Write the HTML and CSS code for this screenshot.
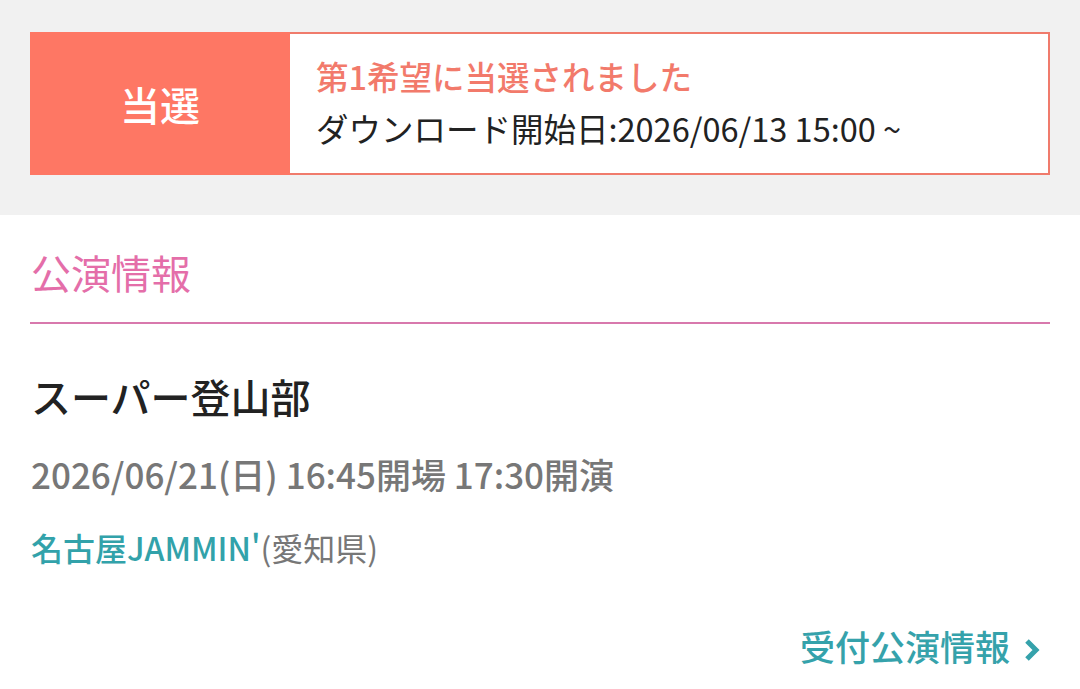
FILE: index.html
```html
<!DOCTYPE html>
<html lang="ja">
<head>
  <meta charset="UTF-8">
  <meta name="viewport" content="width=device-width, initial-scale=1.0">
  <title>公演情報</title>
  <link rel="stylesheet" href="styles.css">
</head>
<body>

<div class="status-area">
  <div class="status-box">
    <div class="status-label">当選</div>
    <div class="status-text">
      <p class="status-title">第1希望に当選されました</p>
      <p class="status-date">ダウンロード開始日:2026/06/13 15:00 ~</p>
    </div>
  </div>
</div>

<div class="info">
  <h2 class="info-heading">公演情報</h2>
  <p class="show-title">スーパー登山部</p>
  <p class="show-date">2026/06/21(日) 16:45開場 17:30開演</p>
  <p class="show-venue"><span class="venue-name">名古屋JAMMIN'</span>(愛知県)</p>
  <div class="more">
    <a class="more-link" href="#">受付公演情報
      <svg class="chevron" width="20" height="26" viewBox="0 0 20 26"><path d="M5 4 L14 13 L5 22" fill="none" stroke="currentColor" stroke-width="5"/></svg>
    </a>
  </div>
</div>

</body>
</html>
```

FILE: styles.css
```css
body {
  margin: 0;
  font-family: "Noto Sans CJK JP", "Noto Sans", sans-serif;
  font-weight: 500;
  background-color: #fff;
  color: #222;
}
p, h2 {
  margin: 0;
}
.status-area {
  background-color: #f1f1f1;
  padding: 32px 30px 40px;
}
.status-box {
  display: flex;
  height: 143px;
  background-color: #fff;
  border: 2px solid #f07b6c;
  box-sizing: border-box;
}
.status-label {
  width: 260px;
  margin: -2px 0 -2px -2px;
  background-color: #fe7764;
  color: #fff;
  font-size: 40px;
  font-weight: 500;
  display: flex;
  align-items: center;
  justify-content: center;
}
.status-text {
  padding: 18px 0 0 26px;
  font-size: 32.5px;
}
.status-title {
  color: #f27a6b;
  line-height: 48px;
}
.status-date {
  color: #222;
  font-weight: 400;
  line-height: 56px;
}
.info {
  padding: 24px 30px 0;
}
.info-heading {
  font-size: 40px;
  font-weight: 400;
  color: #e46ea9;
  line-height: 66px;
  padding: 0 0 17px 1px;
  border-bottom: 2px solid #d879ad;
}
.show-title {
  font-size: 40px;
  line-height: 56px;
  margin-top: 44px;
  padding-left: 1px;
}
.show-date {
  font-size: 35px;
  color: #777;
  line-height: 50px;
  margin-top: 25px;
  padding-left: 1px;
}
.show-venue {
  font-size: 32px;
  color: #777;
  font-weight: 400;
  line-height: 48px;
  margin-top: 24px;
  padding-left: 1px;
}
.venue-name {
  color: #32a2aa;
  font-weight: 500;
}
.more {
  text-align: right;
  margin-top: 51px;
  padding-right: 8px;
}
.more-link {
  font-size: 35px;
  font-weight: 500;
  color: #35a2ab;
  text-decoration: none;
  line-height: 48px;
}
.chevron {
  margin-left: 4px;
  vertical-align: -2px;
}
```
